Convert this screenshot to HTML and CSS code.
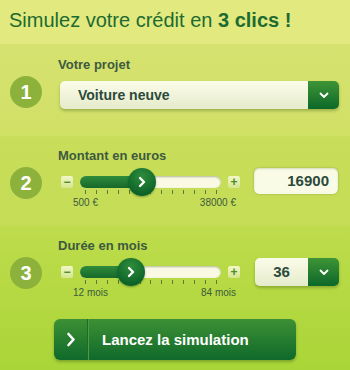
FILE: index.html
```html
<!DOCTYPE html>
<html lang="fr">
<head>
<meta charset="utf-8">
<title>Simulez votre crédit</title>
<link rel="stylesheet" href="styles.css">
</head>
<body>
<div class="sim">
  <div class="head"><h1>Simulez votre crédit en <b>3 clics !</b></h1></div>

  <div class="sec sec1">
    <div class="num">1</div>
    <div class="body">
      <div class="lbl">Votre projet</div>
      <div class="select wide">
        <span class="sel-text">Voiture neuve</span>
        <span class="sel-btn"><svg width="10" height="7" viewBox="0 0 10 7"><polyline points="1.5,1.5 5,5 8.5,1.5" fill="none" stroke="#fff" stroke-width="1.8" stroke-linecap="round" stroke-linejoin="round"/></svg></span>
      </div>
    </div>
  </div>

  <div class="sec sec2">
    <div class="num">2</div>
    <div class="body">
      <div class="lbl">Montant en euros</div>
      <div class="ctrl">
        <div class="slider">
          <div class="srow">
            <span class="pm">&minus;</span>
            <div class="track">
              <div class="fill" style="width:62px"></div>
              <div class="thumb" style="left:48px"><svg width="10" height="12" viewBox="0 0 10 12"><polyline points="3,2 7,6 3,10" fill="none" stroke="#fff" stroke-width="2.3" stroke-linecap="round" stroke-linejoin="round"/></svg></div>
            </div>
            <span class="pm">+</span>
          </div>
          <div class="ticks"><i></i><i></i><i></i><i></i><i></i><i></i><i></i><i></i><i></i><i></i><i></i><i></i><i></i></div>
          <div class="scale"><span>500 €</span><span>38000 €</span></div>
        </div>
        <div class="value">16900</div>
      </div>
    </div>
  </div>

  <div class="sec3">
    <div class="sec">
      <div class="num n3">3</div>
      <div class="body b3">
        <div class="lbl">Durée en mois</div>
        <div class="ctrl">
          <div class="slider">
            <div class="srow">
              <span class="pm">&minus;</span>
              <div class="track">
                <div class="fill" style="width:51px"></div>
                <div class="thumb" style="left:37px"><svg width="10" height="12" viewBox="0 0 10 12"><polyline points="3,2 7,6 3,10" fill="none" stroke="#fff" stroke-width="2.3" stroke-linecap="round" stroke-linejoin="round"/></svg></div>
              </div>
              <span class="pm">+</span>
            </div>
            <div class="ticks"><i></i><i></i><i></i><i></i><i></i><i></i><i></i><i></i><i></i><i></i><i></i><i></i><i></i></div>
            <div class="scale"><span>12 mois</span><span>84 mois</span></div>
          </div>
          <div class="select small">
            <span class="sel-text c">36</span>
            <span class="sel-btn"><svg width="10" height="7" viewBox="0 0 10 7"><polyline points="1.5,1.5 5,5 8.5,1.5" fill="none" stroke="#fff" stroke-width="1.8" stroke-linecap="round" stroke-linejoin="round"/></svg></span>
          </div>
        </div>
      </div>
    </div>
    <button class="cta">
      <span class="cta-ico"><svg width="10" height="15" viewBox="0 0 10 15"><polyline points="2.5,2 7.5,7.5 2.5,13" fill="none" stroke="#fff" stroke-width="2.6" stroke-linecap="round" stroke-linejoin="round"/></svg></span>
      <span class="cta-text">Lancez la simulation</span>
    </button>
  </div>
</div>
</body>
</html>
```

FILE: styles.css
```css
html, body {
  margin: 0;
  padding: 0;
}
body {
  width: 350px;
  height: 370px;
  overflow: hidden;
  font-family: "Liberation Sans", Arial, sans-serif;
}
.sim {
  width: 350px;
  height: 370px;
  display: flex;
  flex-direction: column;
}
.head {
  height: 44px;
  box-sizing: border-box;
  padding: 8px 0 0 9px;
  background: #e1e97f;
}
.head h1 {
  margin: 0;
  font-size: 20px;
  line-height: 24px;
  font-weight: normal;
  color: #1d6b31;
  white-space: nowrap;
}
.head h1 b {
  font-weight: bold;
}
.sec {
  display: flex;
  align-items: flex-start;
}
.sec1 {
  height: 91px;
  background: linear-gradient(#d6e26f, #d1e067);
  padding-top: 13px;
  box-sizing: border-box;
}
.sec2 {
  height: 91px;
  background: linear-gradient(#cfe266 0, #c8de5a 2px, #c5dc56);
  padding-top: 13px;
  box-sizing: border-box;
}
.sec3 {
  flex: 1;
  background: linear-gradient(#bedc4c, #aad538);
  padding-top: 12px;
  box-sizing: border-box;
}
.num {
  width: 32px;
  height: 32px;
  border-radius: 50%;
  background: #8db23c;
  color: #fff;
  font-size: 20px;
  font-weight: bold;
  line-height: 32px;
  text-align: center;
  margin: 19px 16px 0 10px;
  flex: none;
}
.n3 {
  margin-top: 19px;
}
.body {
  flex: 1;
}
.lbl {
  font-size: 13px;
  font-weight: bold;
  line-height: 16px;
  color: #3d5a3f;
  white-space: nowrap;
}
.select {
  display: flex;
  height: 28px;
  border-radius: 5px;
  box-shadow: 0 2px 3px rgba(60, 90, 20, 0.35);
  overflow: hidden;
}
.select.wide {
  width: 279px;
  margin: 8px 0 0 2px;
}
.select.small {
  width: 84px;
  margin-left: 15px;
}
.sel-text {
  flex: 1;
  background: linear-gradient(#fbfce9, #e6ebcb);
  font-size: 14px;
  font-weight: bold;
  line-height: 28px;
  color: #2b4a3c;
  padding-left: 18px;
}
.sel-text.c {
  padding-left: 0;
  text-align: center;
  font-size: 15px;
}
.sel-btn {
  width: 31px;
  flex: none;
  background: linear-gradient(#3f9436, #0c6829);
  display: flex;
  align-items: center;
  justify-content: center;
}
.ctrl {
  display: flex;
  align-items: flex-start;
  margin-top: 4px;
}
.slider {
  display: flex;
  flex-direction: column;
  padding-top: 8px;
  width: 182px;
}
.srow {
  display: flex;
  align-items: center;
  height: 12px;
}
.pm {
  width: 12px;
  height: 12px;
  flex: none;
  border-radius: 2px;
  background: linear-gradient(#f2f7c8, #d4e68e);
  color: #4c8a2c;
  font-size: 12px;
  font-weight: bold;
  line-height: 12px;
  text-align: center;
}
.pm:first-child {
  margin-left: 3px;
}
.track {
  position: relative;
  width: 141px;
  height: 12px;
  margin: 0 7px;
  border-radius: 6px;
  background: #f9f9e4;
  box-shadow: inset 0 1px 2px rgba(90, 110, 60, 0.45);
}
.fill {
  height: 12px;
  border-radius: 6px;
  background: linear-gradient(#2f8b3a, #17692b);
}
.thumb {
  position: absolute;
  top: -8px;
  width: 28px;
  height: 28px;
  border-radius: 50%;
  background: radial-gradient(circle at 50% 30%, #2f8d3c, #0c6228 75%);
  box-shadow: 0 1px 2px rgba(0, 50, 0, 0.4);
  display: flex;
  align-items: center;
  justify-content: center;
}
.ticks {
  display: flex;
  justify-content: space-between;
  width: 132px;
  margin: 2px 0 0 27px;
}
.ticks i {
  width: 1px;
  height: 4px;
  background: #5b7a3e;
}
.scale {
  display: flex;
  justify-content: space-between;
  width: 163px;
  margin: 3px 0 0 15px;
  font-size: 10px;
  line-height: 12px;
  color: #3d5a3f;
}
.value {
  width: 84px;
  height: 26px;
  box-sizing: border-box;
  margin-left: 14px;
  border-radius: 5px;
  background: #fafbe7;
  box-shadow: 0 0 2px rgba(90, 120, 40, 0.5), inset 0 1px 2px rgba(120, 140, 80, 0.3);
  text-align: right;
  padding-right: 9px;
  font-size: 15px;
  font-weight: bold;
  line-height: 26px;
  color: #2b4a3c;
}
.cta {
  display: flex;
  align-items: stretch;
  width: 242px;
  height: 41px;
  margin: 20px 0 0 54px;
  padding: 0;
  border: none;
  border-radius: 6px;
  background: linear-gradient(#3d9034, #0f6a2b);
  box-shadow: 0 2px 3px rgba(40, 80, 10, 0.35);
  font-family: inherit;
  cursor: pointer;
  overflow: hidden;
}
.cta-ico {
  width: 34px;
  flex: none;
  display: flex;
  align-items: center;
  justify-content: center;
  border-right: 1px solid #1f6a26;
  box-sizing: border-box;
}
.cta-text {
  flex: 1;
  text-align: left;
  padding-left: 13px;
  border-left: 1px solid #4c9c43;
  font-size: 15px;
  font-weight: bold;
  line-height: 41px;
  color: #fff;
  white-space: nowrap;
}
```
